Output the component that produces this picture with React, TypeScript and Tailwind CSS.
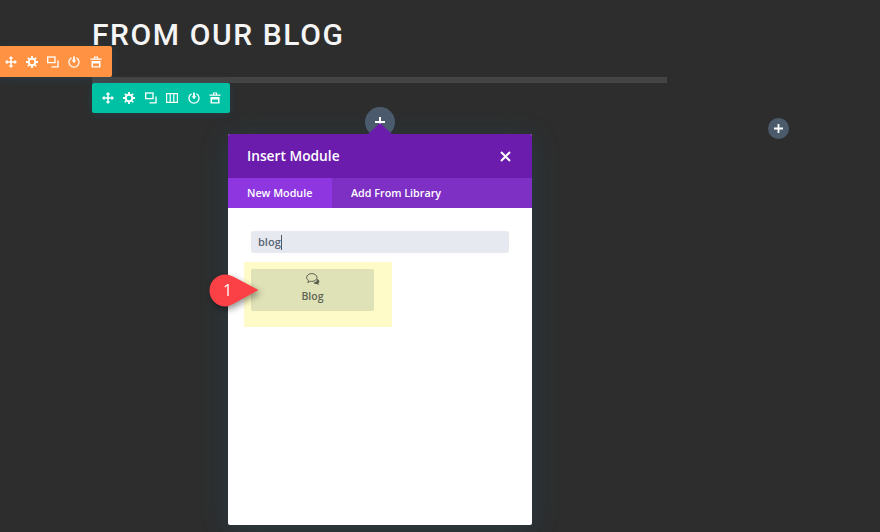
function MoveIcon() {
  return (
    <svg width="12" height="12" viewBox="0 0 12 12" fill="none" stroke="white" strokeWidth="1.5">
      <path d="M6 1v10M1 6h10" />
      <path d="M4.2 2.2 6 .4l1.8 1.8zM4.2 9.8 6 11.6l1.8-1.8zM2.2 4.2.4 6l1.8 1.8zM9.8 4.2 11.6 6l-1.8 1.8z" fill="white" strokeWidth="0.6" />
    </svg>
  );
}

function GearIcon() {
  return (
    <svg width="12" height="12" viewBox="0 0 12 12" fill="none" stroke="white">
      <circle cx="6" cy="6" r="3.3" strokeWidth="1.9" />
      <path d="M6 0v2M6 10v2M0 6h2M10 6h2M1.8 1.8l1.4 1.4M8.8 8.8l1.4 1.4M1.8 10.2l1.4-1.4M8.8 3.2l1.4-1.4" strokeWidth="1.8" />
    </svg>
  );
}

function CloneIcon() {
  return (
    <svg width="12" height="12" viewBox="0 0 12 12" fill="none" stroke="white" strokeWidth="1.3">
      <rect x="0.7" y="1" width="7.3" height="5.6" />
      <path d="M11 4.500v6.300H4.500" />
    </svg>
  );
}

function ColumnsIcon() {
  return (
    <svg width="12" height="12" viewBox="0 0 12 12" fill="none" stroke="white" strokeWidth="1.2">
      <rect x="0.6" y="1.600" width="10.800" height="8.800" />
      <path d="M4.200 1.600v8.800M7.800 1.600v8.800" />
    </svg>
  );
}

function PowerIcon() {
  return (
    <svg width="12" height="12" viewBox="0 0 12 12" fill="none" stroke="white" strokeWidth="1.3">
      <path d="M3.600 1.800a5 5 0 1 0 4.800 0" />
      <path d="M6 .5v4.500" strokeWidth="1.800" />
      <path d="M4 4.200 6 7l2-2.800z" fill="white" strokeWidth="0.4" />
    </svg>
  );
}

function TrashIcon() {
  return (
    <svg width="12" height="12" viewBox="0 0 12 12" fill="white">
      <path d="M4 .5h4v2h3.500v1.200H.5V2.500H4zM5 1.500v1h2v-1z" fillRule="evenodd" />
      <path d="M1.500 5h9v6.500h-9zM3 7.500v2.700h6V7.500z" fillRule="evenodd" />
    </svg>
  );
}

function PlusButton({ className, size }: { className: string; size: number }) {
  return (
    <div className={`flex items-center justify-center rounded-full bg-[#4c5b6c] ${className}`}>
      <svg width={size} height={size} viewBox="0 0 10 10" stroke="white" strokeWidth="2">
        <path d="M5 0v10M0 5h10" />
      </svg>
    </div>
  );
}

function BubbleIcon() {
  return (
    <svg width="14" height="13" viewBox="0 0 14 13" fill="none" stroke="#5a5f50" strokeWidth="1">
      <path d="M5.800.6c2.900 0 5.200 1.700 5.200 3.900S8.700 8.400 5.800 8.400c-.5 0-1 0-1.500-.2L1.900 9.600l.5-2.400C1.200 6.500.6 5.600.6 4.500.6 2.300 2.900.6 5.800.6z" />
      <path d="M11.200 6c1.200.4 2.200 1.300 2.200 2.500 0 .8-.4 1.400-1 1.800l.3 1.700-2-1.100c-1.300.2-2.600-.3-3.200-1.200 2-.2 3.400-1.300 3.700-3.700z" fill="#5a5f50" stroke="none" />
    </svg>
  );
}

export default function App() {
  return (
    <div className="relative h-[532px] w-[880px] overflow-hidden bg-[#2d2d2d] pl-[92px] pt-[16px] [font-family:'Open_Sans',sans-serif]">
      {/* Section toolbar hangs off the left edge, over the title row */}
      <div className="absolute left-0 top-[46px] z-10 flex h-[31px] w-[112px] items-center gap-[9.25px] rounded-r-[2px] bg-[#ff9343] pl-[4.5px] shadow-[0_2px_8px_rgba(30,120,160,0.2)]">
        <MoveIcon />
        <GearIcon />
        <CloneIcon />
        <PowerIcon />
        <TrashIcon />
      </div>

      <h1 className="h-[37px] text-[30px] leading-[37px] font-medium tracking-[1.6px] text-[#f5f5f5] [font-family:Roboto,sans-serif]">
        FROM OUR BLOG
      </h1>
      <div className="mt-[24px] h-[6px] w-[575px] bg-[#444444]" />

      {/* Row toolbar */}
      <div className="flex h-[30px] w-[138px] items-center gap-[9.5px] rounded-[2px] bg-[#00c1a4] pl-[9.5px] shadow-[0_2px_8px_rgba(30,120,160,0.2)]">
        <MoveIcon />
        <GearIcon />
        <CloneIcon />
        <ColumnsIcon />
        <PowerIcon />
        <TrashIcon />
      </div>

      <PlusButton size={10} className="absolute left-[365px] top-[107px] h-[30px] w-[30px]" />
      <PlusButton size={9} className="absolute left-[768px] top-[118px] h-[21px] w-[21px]" />

      {/* Insert module dialog */}
      <div className="relative ml-[136px] mt-[21px] h-[391px] w-[304px] rounded-[2px] bg-white shadow-[0_5px_30px_rgba(30,120,160,0.2)]">
        <div className="absolute -top-[11px] left-[140px] h-0 w-0 border-x-[12px] border-b-[11px] border-x-transparent border-b-[#6c1cad]" />
        <div className="flex h-[44px] items-center justify-between rounded-t-[2px] bg-[#6c1cad] pl-[19px] pr-[21px]">
          <span className="text-[13.75px] font-semibold text-white">Insert Module</span>
          <svg width="11" height="11" viewBox="0 0 11 11" stroke="white" strokeWidth="2">
            <path d="M1 1l9 9M10 1l-9 9" />
          </svg>
        </div>
        <div className="flex h-[30px] bg-[#7e2fc4] text-[10.75px] font-semibold text-white">
          <div className="flex w-[104px] items-center bg-[#8e37e0] pl-[19px]">New Module</div>
          <div className="flex items-center pl-[19px]">Add From Library</div>
        </div>

        <div className="pl-[23px] pt-[23px]">
          <div className="flex h-[22px] w-[258px] items-center rounded-[3px] bg-[#e6e9f0] pl-[7px] text-[11px] font-semibold text-[#5a6675]">
            blog
            <span className="h-[15px] w-px bg-[#4c5866]" />
          </div>
          <div className="-ml-[7px] mt-[9px] h-[65px] w-[148px] bg-[#fffbc8] pl-[7px] pt-[7px]">
            <div className="flex h-[42px] w-[123px] flex-col items-center rounded-[2px] bg-[#dfe1b6] pt-[4px] text-[10.500px] font-semibold text-[#5e6655]">
              <BubbleIcon />
              <span className="mt-[2px] leading-[16px]">Blog</span>
            </div>
          </div>
        </div>

        {/* Step marker pointing at the module */}
        <div className="absolute left-[-19px] top-[140px] drop-shadow-[2px_3px_3px_rgba(0,0,0,0.4)]">
          <svg width="50" height="33" viewBox="0 0 50 33">
            <path d="M16.500.500c3 0 5.500 1 8 2.300L49.500 16 25 29.500c-2.500 1.500-5.500 3-8.500 3C7.500 32.500.500 25.300.500 16.500S7.500.500 16.500.500z" fill="#fb4146" />
          </svg>
          <span className="absolute left-[14px] top-[6px] text-[16px] leading-[21px] text-white">1</span>
        </div>
      </div>
    </div>
  );
}
